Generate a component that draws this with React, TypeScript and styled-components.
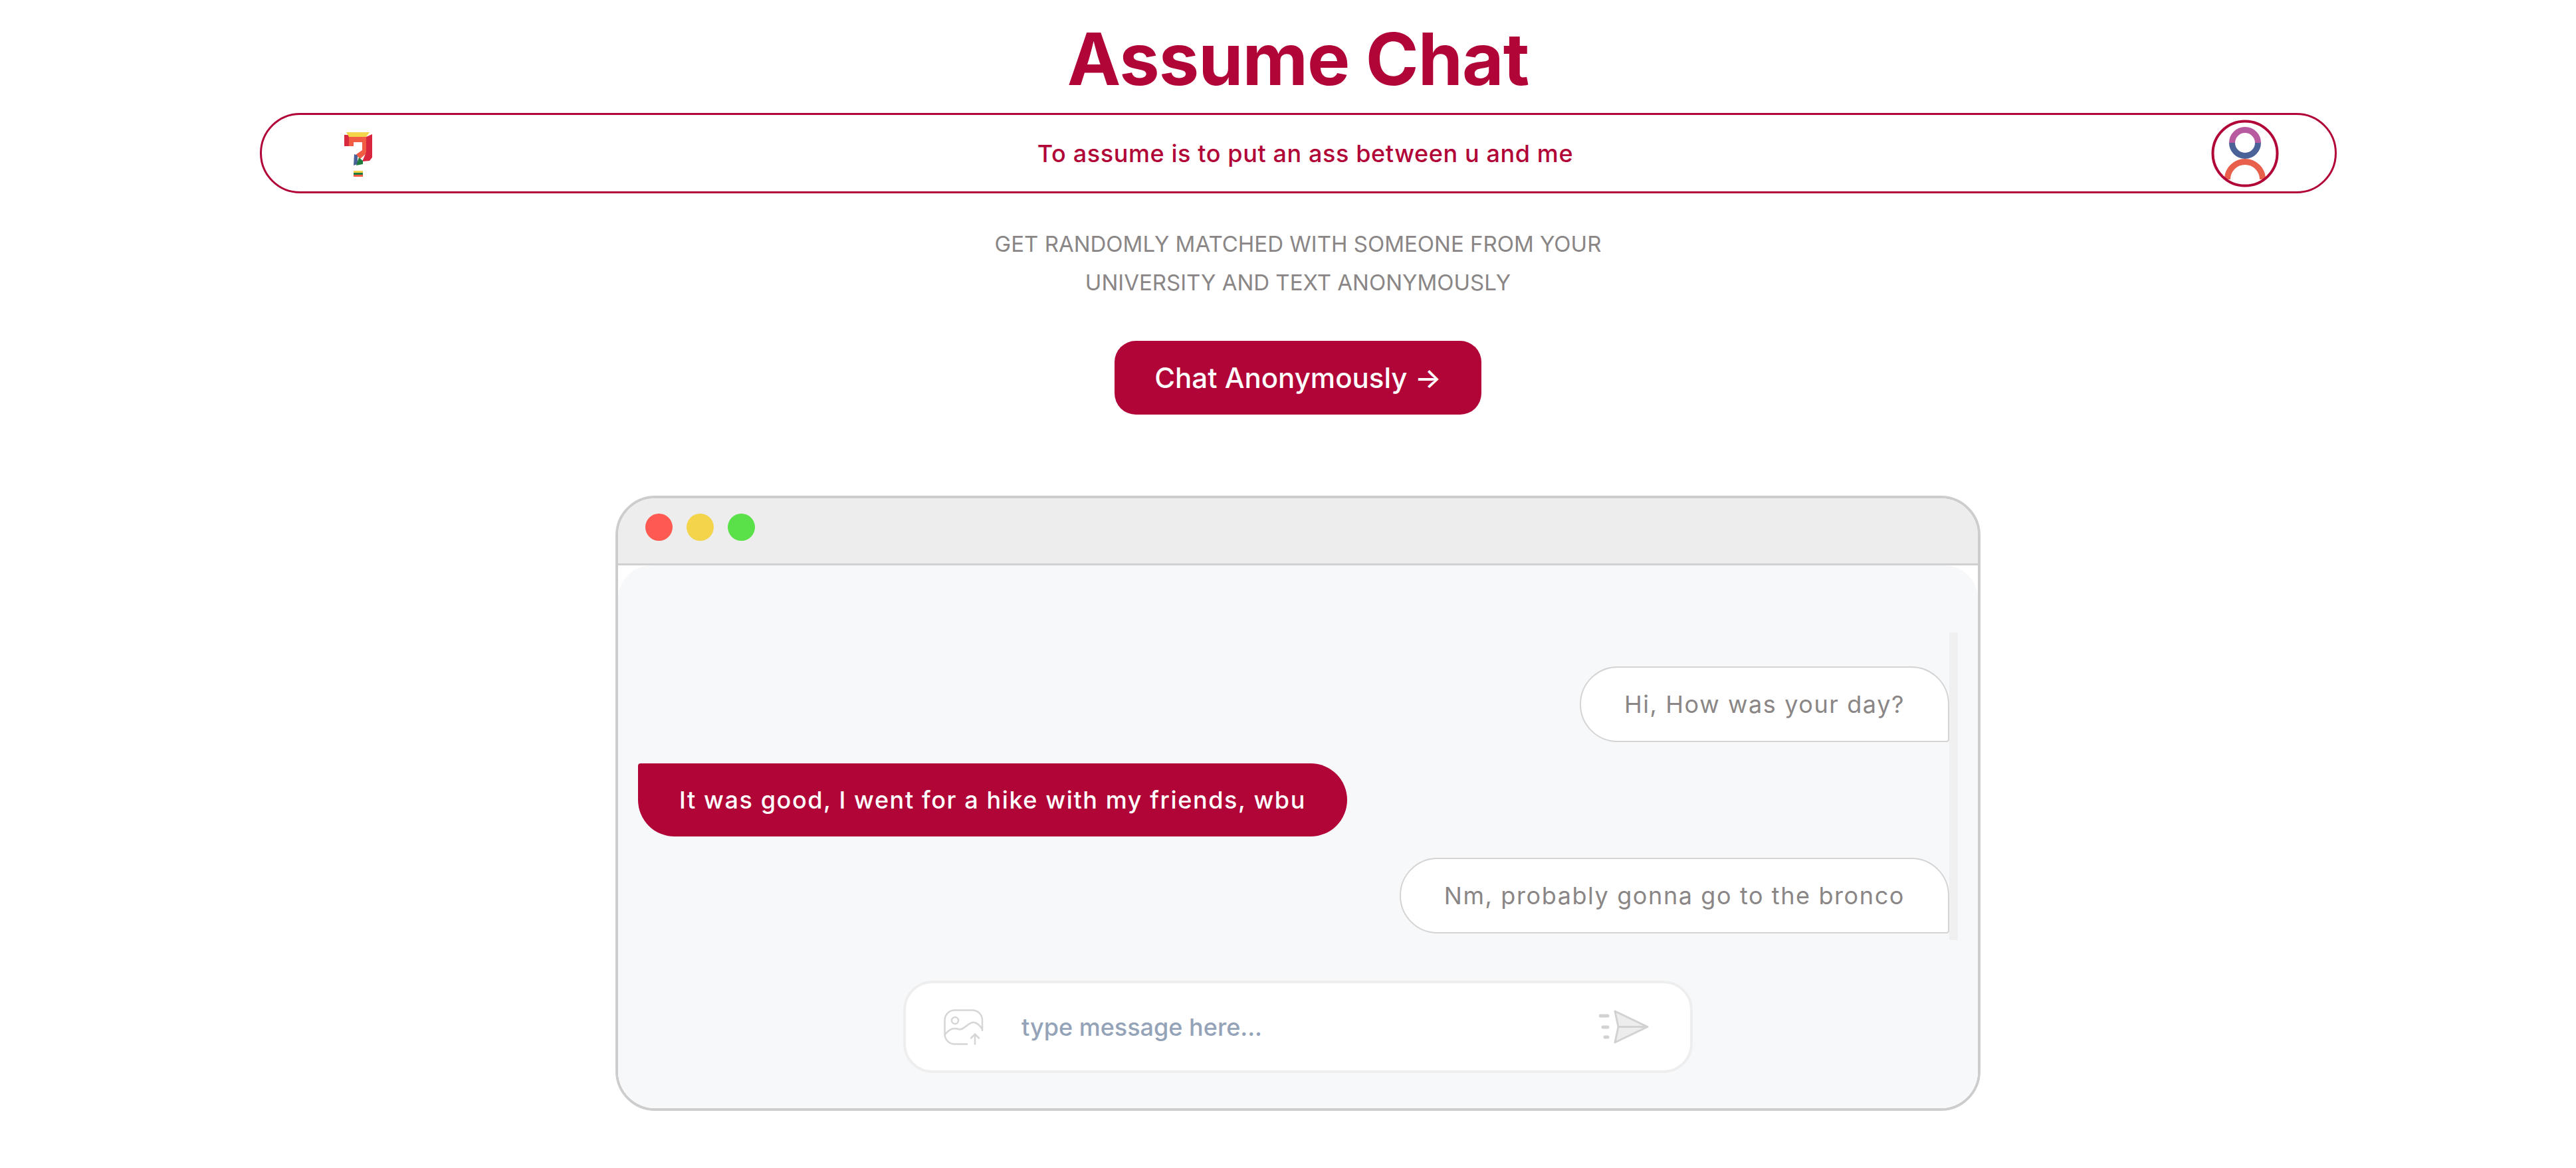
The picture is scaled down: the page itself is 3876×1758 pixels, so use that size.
import styled, { createGlobalStyle } from "styled-components";

const crimson = "#b10538";

const GlobalStyle = createGlobalStyle`
  html, body {
    margin: 0;
    background: #ffffff;
    font-family: "Inter", "Noto Sans", sans-serif;
  }
`;

export default function App() {
  return (
    <>
      <GlobalStyle />
      <Page>
        <Title>Assume Chat</Title>
        <NavBar>
          <QuestionLogo />
          <Tagline>To assume is to put an ass between u and me</Tagline>
          <ProfileIcon />
        </NavBar>
        <Subtitle>
          GET RANDOMLY MATCHED WITH SOMEONE FROM YOUR
          <br />
          UNIVERSITY AND TEXT ANONYMOUSLY
        </Subtitle>
        <ChatButton>Chat Anonymously →</ChatButton>
        <ChatWindow>
          <TitleBar>
            <Dot $color="#ff5a52" />
            <Dot $color="#f3d44a" />
            <Dot $color="#5ae048" />
          </TitleBar>
          <ChatBackdrop>
            <ChatBody>
              <Messages>
                <Bubble>Hi, How was your day?</Bubble>
                <Bubble $mine>It was good, I went for a hike with my friends, wbu</Bubble>
                <Bubble>Nm, probably gonna go to the bronco</Bubble>
              </Messages>
              <InputBar>
                <ImageUploadIcon />
                <Placeholder>type message here...</Placeholder>
                <SendIcon />
              </InputBar>
            </ChatBody>
          </ChatBackdrop>
        </ChatWindow>
      </Page>
    </>
  );
}

function QuestionLogo() {
  return (
    <LogoSvg viewBox="0 0 42 68">
      <polygon points="0,4 14,4 14,21 0,21" fill="#d9293f" />
      <polygon points="7,7 33,7 33,32 24,40 17,34 27,27 27,15 14,15 14,21 7,21" fill="#f25c45" />
      <polygon points="42,3 42,38 38,43 27,44 33,30 33,7" fill="#d9263f" />
      <polygon points="3,0 38,0 33,7 7,7" fill="#f3d44a" />
      <polygon points="15,33 20,35 20,48 14,50" fill="#4a6298" />
      <polygon points="22,38 28,43 28,48 18,50" fill="#1f7a3e" />
      <rect x="14" y="58" width="14" height="3" fill="#f3d44a" />
      <rect x="14" y="61" width="14" height="3" fill="#1f7a3e" />
      <rect x="14" y="64" width="14" height="3" fill="#f25c45" />
    </LogoSvg>
  );
}

function ProfileIcon() {
  return (
    <ProfileSvg viewBox="0 0 102 102" fill="none">
      <path d="M31.5 35 A19.5 19.5 0 0 1 70.5 35" stroke="#b85aa0" strokeWidth="9" />
      <path d="M31.5 35 A19.5 19.5 0 0 0 70.5 35" stroke="#4a6298" strokeWidth="9" />
      <path d="M24.5 90 A26.5 26.5 0 0 1 77.5 90" stroke="#e8604c" strokeWidth="9" />
      <circle cx="51" cy="51" r="48.5" stroke={crimson} strokeWidth="4" />
    </ProfileSvg>
  );
}

function ImageUploadIcon() {
  return (
    <ImageSvg viewBox="0 0 60 54" fill="none" stroke="#d6d6d6" strokeWidth="2.5" strokeLinecap="round">
      <path d="M35 52.5 H16 A15 15 0 0 1 1.5 37 V16 A15 15 0 0 1 16 1.5 H43 A15 15 0 0 1 58 16 V32" />
      <circle cx="17" cy="17" r="5" />
      <path d="M2 38 C8 30 14 27 22 30 C30 33 38 18 46 20 C50 21 55 25 58 30" />
      <path d="M47 52.5 V38 M41 43.5 L47 37.5 L53 43.5" />
    </ImageSvg>
  );
}

function SendIcon() {
  return (
    <SendSvg viewBox="0 0 75 51" fill="none" stroke="#d2d2d2" strokeLinecap="round" strokeLinejoin="round">
      <path d="M24 2 L73 25.5 L24 49 L29 25.5 Z" fill="#ededed" strokeWidth="3" />
      <path d="M29 25.5 H70" strokeWidth="3" />
      <path d="M2 9 H13 M6 26 H13 M9 41 H13" strokeWidth="5" />
    </SendSvg>
  );
}

const Page = styled.div`
  display: flex;
  flex-direction: column;
  align-items: center;
  padding-left: 30px;
  padding-bottom: 85px;
  box-sizing: border-box;
  width: 3876px;
`;

const Title = styled.h1`
  margin: 0;
  height: 170px;
  line-height: 178px;
  font-size: 108px;
  font-weight: 700;
  letter-spacing: -1px;
  color: ${crimson};
`;

const NavBar = styled.div`
  box-sizing: border-box;
  width: 3125px;
  height: 121px;
  padding: 0 84px 0 124px;
  display: flex;
  align-items: center;
  justify-content: space-between;
  border: 3px solid ${crimson};
  border-radius: 61px;
`;

const LogoSvg = styled.svg`
  width: 42px;
  height: 68px;
  margin-right: 42px;
  margin-top: 4px;
`;

const ProfileSvg = styled.svg`
  width: 102px;
  height: 102px;
`;

const Tagline = styled.span`
  font-size: 36px;
  font-weight: 500;
  letter-spacing: 0.6px;
  color: ${crimson};
`;

const Subtitle = styled.p`
  margin: 47px 0 0;
  font-size: 33px;
  line-height: 58px;
  font-weight: 400;
  text-align: center;
  color: #8a8686;
`;

const ChatButton = styled.button`
  margin-top: 59px;
  width: 552px;
  height: 111px;
  border: none;
  border-radius: 32px;
  background: ${crimson};
  color: #ffffff;
  font-family: inherit;
  font-size: 42px;
  font-weight: 500;
`;

const ChatWindow = styled.div`
  margin-top: 122px;
  box-sizing: border-box;
  width: 2054px;
  height: 926px;
  display: flex;
  flex-direction: column;
  border: 4px solid #cdcdcd;
  border-radius: 60px;
  overflow: hidden;
`;

const TitleBar = styled.div`
  box-sizing: border-box;
  height: 101px;
  padding: 0 0 11px 41px;
  display: flex;
  align-items: center;
  gap: 21px;
  flex-shrink: 0;
  background: #ededed;
  border-bottom: 3px solid #d0d0d0;
`;

const Dot = styled.span<{ $color: string }>`
  width: 41px;
  height: 41px;
  border-radius: 50%;
  background: ${(p) => p.$color};
`;

const ChatBackdrop = styled.div`
  flex: 1;
  display: flex;
  background: #ffffff;
`;

const ChatBody = styled.div`
  flex: 1;
  box-sizing: border-box;
  padding: 101px 30px 53px;
  display: flex;
  flex-direction: column;
  align-items: center;
  background: #f7f8fa;
  border-radius: 50px 50px 0 0;
`;

const Messages = styled.div`
  box-sizing: border-box;
  width: 100%;
  height: 463px;
  padding-top: 51px;
  display: flex;
  flex-direction: column;
  gap: 32px;
  border-right: 13px solid #f0f0f0;
`;

const Bubble = styled.div<{ $mine?: boolean }>`
  box-sizing: border-box;
  align-self: ${(p) => (p.$mine ? "flex-start" : "flex-end")};
  height: ${(p) => (p.$mine ? "110px" : "114px")};
  padding: 0 ${(p) => (p.$mine ? "62px" : "65px")};
  display: flex;
  align-items: center;
  font-size: 36px;
  letter-spacing: 1.6px;
  font-weight: ${(p) => (p.$mine ? 500 : 400)};
  color: ${(p) => (p.$mine ? "#ffffff" : "#8a8686")};
  background: ${(p) => (p.$mine ? crimson : "#ffffff")};
  border: ${(p) => (p.$mine ? "none" : "2px solid #d4d4d4")};
  border-radius: ${(p) => (p.$mine ? "4px 55px 55px 55px" : "57px 57px 4px 57px")};
`;

const InputBar = styled.div`
  box-sizing: border-box;
  margin-top: 61px;
  width: 1188px;
  height: 139px;
  padding: 0 62px 0 57px;
  display: flex;
  align-items: center;
  background: #ffffff;
  border: 4px solid #eeeeee;
  border-radius: 44px;
`;

const ImageSvg = styled.svg`
  width: 60px;
  height: 54px;
  flex-shrink: 0;
`;

const Placeholder = styled.span`
  flex: 1;
  margin-left: 57px;
  font-size: 36px;
  font-weight: 500;
  color: #94a3b8;
`;

const SendSvg = styled.svg`
  width: 75px;
  height: 51px;
  flex-shrink: 0;
`;
